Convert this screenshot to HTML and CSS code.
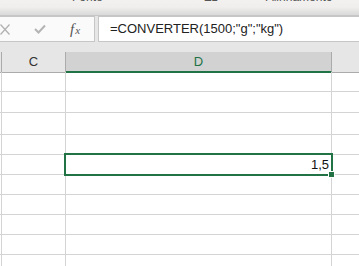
FILE: index.html
```html
<!DOCTYPE html>
<html lang="pt">
<head>
    <meta charset="UTF-8">
    <title>Planilha - CONVERTER</title>
    <link rel="stylesheet" href="styles.css">
</head>
<body>
    <div class="ribbon">
        <span class="grp grp-font">Fonte</span>
        <span class="grp grp-launch">Ez</span>
        <span class="grp grp-align">Alinhamento</span>
    </div>

    <div class="fbar">
        <div class="fbar-btns">
            <svg class="btn btn-x" width="10" height="11" viewBox="0 0 10 11">
                <path d="M0.5 0.5 L9.5 10.5 M9.5 0.5 L0.5 10.5" fill="none" stroke="#b0b0b0" stroke-width="1.2"/>
            </svg>
            <svg class="btn btn-ok" width="12" height="10" viewBox="0 0 12 10">
                <path d="M1 5 L4.5 8.5 L11 1.5" fill="none" stroke="#b4b4b4" stroke-width="2"/>
            </svg>
            <span class="btn fx"><i>f</i><i class="fx-x">x</i></span>
        </div>
        <div class="fbar-input">=CONVERTER(1500;"g";"kg")</div>
    </div>

    <div class="sheet">
        <div class="colhead">
            <div class="ch ch-stub"></div>
            <div class="ch">C</div>
            <div class="ch ch-sel">D</div>
            <div class="ch ch-last"></div>
        </div>

        <div class="grid">
            <div class="c stub"></div><div class="c"></div><div class="c"></div><div class="c last"></div>
            <div class="c stub"></div><div class="c"></div><div class="c"></div><div class="c last"></div>
            <div class="c stub"></div><div class="c"></div><div class="c"></div><div class="c last"></div>
            <div class="c stub"></div><div class="c"></div><div class="c"></div><div class="c last"></div>
            <div class="c stub"></div><div class="c"></div><div class="c num">1,5</div><div class="c last"></div>
            <div class="c stub"></div><div class="c"></div><div class="c"></div><div class="c last"></div>
            <div class="c stub"></div><div class="c"></div><div class="c"></div><div class="c last"></div>
            <div class="c stub"></div><div class="c"></div><div class="c"></div><div class="c last"></div>
            <div class="c stub"></div><div class="c"></div><div class="c"></div><div class="c last"></div>
            <div class="c stub"></div><div class="c"></div><div class="c"></div><div class="c last"></div>
        </div>

        <!-- celula ativa D -->
        <div class="active"><span class="handle"></span></div>
    </div>
</body>
</html>
```

FILE: styles.css
```css
body {
    margin: 0;
    width: 359px;
    height: 266px;
    overflow: hidden;
    background-color: #fff;
    font-family: "Liberation Sans", Arial, sans-serif;
}

.ribbon {
    height: 15px;
    border-bottom: 1px solid #c6c6c6;
    background: linear-gradient(#f2f1f0 0, #f0efee 7px, #d9d9d9 15px);
    display: flex;
    overflow: hidden;
}
.grp {
    font-size: 12px;
    line-height: 12px;
    color: #555;
    margin-top: -9px;
}
.grp-font {
    margin-left: 72px;
}
.grp-launch {
    margin-left: 101px;
}
.grp-align {
    margin-left: 48px;
}

.fbar {
    display: flex;
    gap: 3px;
    padding: 0 0 10px 0;
    background-color: #e6e6e6;
}
.fbar-btns {
    width: 95px;
    height: 26px;
    box-sizing: border-box;
    border: 1px solid #c6c6c6;
    border-left: none;
    background-color: #fafafa;
    display: flex;
    align-items: center;
}
.btn-x {
    margin-left: 0;
}
.btn-ok {
    margin-left: 24px;
}
.fx {
    margin-left: 24px;
    font-family: "Liberation Serif", serif;
    font-size: 15px;
    color: #555;
}
.fx-x {
    font-size: 11px;
    margin-left: 1px;
}
.fbar-input {
    flex: 1;
    height: 26px;
    box-sizing: border-box;
    border: 1px solid #c6c6c6;
    border-right: none;
    background-color: #fff;
    font-size: 13px;
    color: #222;
    line-height: 24px;
    padding-left: 11px;
}

.sheet {
    position: relative;
}
.colhead {
    display: grid;
    grid-template-columns: 2px 64px 266px 27px;
    height: 20px;
}
.ch {
    box-sizing: border-box;
    background-color: #e6e6e6;
    border-right: 1px solid #ababab;
    border-bottom: 1px solid #ababab;
    font-size: 13px;
    color: #333;
    text-align: center;
    line-height: 19px;
}
.ch-sel {
    background-color: #d2d2d2;
    color: #217346;
    border-bottom: 2px solid #217346;
}
.ch-last {
    border-right: none;
}

.grid {
    display: grid;
    grid-template-columns: 2px 64px 266px 27px;
    grid-template-rows: 20px 21px 22px 20px 20px 20px 20px 20px 20px 20px;
}
.c {
    box-sizing: border-box;
    border-right: 1px solid #d4d4d4;
    border-bottom: 1px solid #d4d4d4;
}
.c.last {
    border-right: none;
}
.num {
    font-size: 13px;
    color: #111;
    text-align: right;
    padding-right: 2px;
    line-height: 19px;
}

.active {
    position: absolute;
    left: 64px;
    top: 101px;
    width: 269px;
    height: 23px;
    box-sizing: border-box;
    border: 2px solid #217346;
}
.handle {
    position: absolute;
    right: -4px;
    bottom: -4px;
    width: 5px;
    height: 5px;
    background-color: #217346;
    border: 1px solid #fff;
}
```
